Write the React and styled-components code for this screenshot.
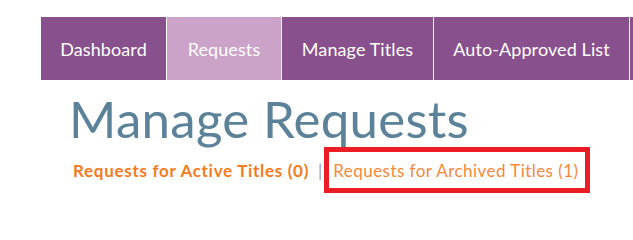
import React from "react";
import styled, { createGlobalStyle } from "styled-components";

const GlobalStyle = createGlobalStyle`
  html, body {
    margin: 0;
    padding: 0;
    background: #ffffff;
    font-family: "Lato", "Open Sans", Arial, sans-serif;
    overflow: hidden;
  }
`;

const Page = styled.div`
  width: 633px;
  height: 200px;
  overflow: hidden;
  padding-top: 17px;
  box-sizing: border-box;
`;

const Nav = styled.ul`
  display: flex;
  gap: 1px;
  list-style: none;
  margin: 0 0 0 41px;
  padding: 0;
  height: 63px;
  white-space: nowrap;
`;

const Tab = styled.li`
  display: flex;
  align-items: center;
  flex-shrink: 0;
  width: ${p => p.$w}px;
  box-sizing: border-box;
  justify-content: center;
  background: ${p => (p.$active ? "#cba2c8" : "#88508c")};
  color: #ffffff;
  font-size: 18px;
  letter-spacing: 0.1px;
`;

const Content = styled.div`
  padding-left: 69px;
`;

const Heading = styled.h1`
  margin: 9px 0 0 0;
  font-size: 51px;
  font-weight: 400;
  line-height: 60px;
  color: #5b8299;
  letter-spacing: 0.3px;
`;

const SubNav = styled.div`
  display: flex;
  align-items: center;
  margin-top: -2px;
  font-size: 17px;
`;

const SubLink = styled.a`
  color: ${p => (p.$active ? "#f47b20" : "#f7883a")};
  font-weight: ${p => (p.$active ? 700 : 400)};
  letter-spacing: ${p => (p.$active ? "0.7px" : "0.45px")};
  text-decoration: none;
  padding-left: 4px;
`;

const Divider = styled.span`
  color: #a0a0a0;
  margin: 0 2px 0 9px;
`;

const Highlight = styled.span`
  display: inline-flex;
  align-items: center;
  height: 46px;
  box-sizing: border-box;
  border: 5px solid #ec1c24;
  padding: 0 6px 0 0;
`;

const tabs = [
  { label: "Dashboard", w: 125 },
  { label: "Requests", w: 114, active: true },
  { label: "Manage Titles", w: 151 },
  { label: "Auto-Approved List", w: 195 },
  { label: "", w: 110 },
];

export default function App() {
  return (
    <Page>
      <GlobalStyle />
      <Nav>
        {tabs.map((t, i) => (
          <Tab key={i} $w={t.w} $active={t.active}>
            {t.label}
          </Tab>
        ))}
      </Nav>
      <Content>
        <Heading>Manage Requests</Heading>
        <SubNav>
          <SubLink $active href="#">Requests for Active Titles (0)</SubLink>
          <Divider>|</Divider>
          <Highlight>
            <SubLink href="#">Requests for Archived Titles (1)</SubLink>
          </Highlight>
        </SubNav>
      </Content>
    </Page>
  );
}
